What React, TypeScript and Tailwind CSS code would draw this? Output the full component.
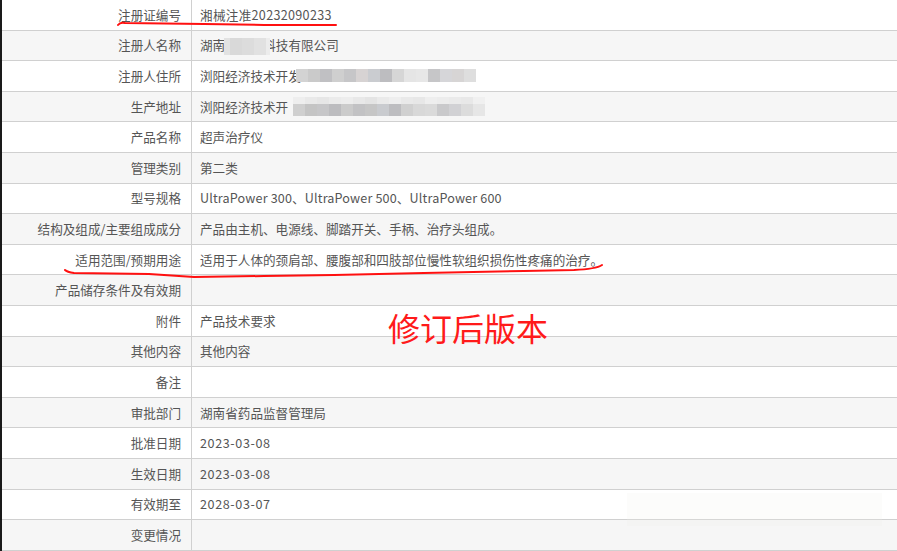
import React from "react";

const rows: [string, string, string?][] = [
  ["注册证编号", "湘械注准20232090233", "tracking-[0.3px]"],
  ["注册人名称", "湖南"],
  ["注册人住所", "浏阳经济技术开发"],
  ["生产地址", "浏阳经济技术开"],
  ["产品名称", "超声治疗仪"],
  ["管理类别", "第二类"],
  ["型号规格", "UltraPower 300、UltraPower 500、UltraPower 600", "tracking-[0.15px]"],
  ["结构及组成/主要组成成分", "产品由主机、电源线、脚踏开关、手柄、治疗头组成。"],
  ["适用范围/预期用途", "适用于人体的颈肩部、腰腹部和四肢部位慢性软组织损伤性疼痛的治疗。"],
  ["产品储存条件及有效期", ""],
  ["附件", "产品技术要求"],
  ["其他内容", "其他内容"],
  ["备注", ""],
  ["审批部门", "湖南省药品监督管理局"],
  ["批准日期", "2023-03-08", "tracking-[0.6px]"],
  ["生效日期", "2023-03-08", "tracking-[0.6px]"],
  ["有效期至", "2028-03-07", "tracking-[0.6px]"],
  ["变更情况", ""],
];

const mosaic3 = ["#d3d3d3", "#cacaca", "#c0c0c3", "#cfcfcf", "#c6c6c8", "#d7d3d3", "#caccd0", "#bdbdc0", "#d6d6d6", "#e5e5e5", "#e7e7e7", "#c6c6c8", "#d6d6d9", "#d7d5d5", "#dedede"];
const mosaic4a = ["#eeeeee", "#e9e9e9", "#e6e6e6", "#ebebeb", "#ededed", "#e8e8e8", "#e4e4e4", "#eaeaea", "#eeeeee", "#e9e9e9", "#e7e7e7", "#eeeeee", "#ececec", "#eaeaea", "#e8e8e8", "#f0f0f0"];
const mosaic4b = ["#cfcfcf", "#c4c4c4", "#c6c6c8", "#bcbcbf", "#cbcbcb", "#c2c2c4", "#c6c6c6", "#c9cbcf", "#bdbdc0", "#d0d0d0", "#d8d8d8", "#dadada", "#c9c9cb", "#d1d1d4", "#dcdcdc", "#e6e6e6"];

export default function App() {
  return (
    <div
      className="relative w-[897px] h-[551px] overflow-hidden bg-white border-l-2 border-[#1a1a1a]"
      style={{ fontFamily: '"Noto Sans CJK SC", "Noto Sans", sans-serif' }}
    >
      <div className="flex flex-col">
        {rows.map(([label, value, extra], i) => (
          <div
            key={i}
            className={`flex h-[30.6px] shrink-0 border-b border-[#d0d0d0] text-[12.6px] text-[#555] ${i % 2 === 1 ? "bg-[#f6f6f6]" : "bg-white"}`}
          >
            <div className="w-[190px] shrink-0 flex items-center justify-end pr-[10px] pt-px border-r border-[#d0d0d0] whitespace-nowrap">
              {label}
            </div>
            <div className={`flex items-center pl-[8px] pt-px whitespace-nowrap ${extra ?? ""}`}>
              {value}
              {i === 1 && <span className="ml-[38px]">科技有限公司</span>}
              {i === 3 && <span className="ml-[168px] text-[#888]">号</span>}
            </div>
          </div>
        ))}
      </div>

      {/* mosaic blurs */}
      <div className="absolute left-[222px] top-[38px] flex h-[17px]">
        <div className="w-[6px] bg-[#e2e2e2]" />
        <div className="w-[12px] bg-[#d9d9d9]" />
        <div className="w-[12px] bg-[#dcdcdc]" />
        <div className="w-[12px] bg-[#e1e1e1]" />
        <div className="w-[4px] bg-[#ececec]" />
      </div>
      <div className="absolute left-[294px] top-[69px] flex h-[13px]">
        {mosaic3.map((c, k) => (
          <div key={k} className="w-[12px]" style={{ background: c }} />
        ))}
      </div>
      <div className="absolute left-[291px] top-[97px] flex flex-col">
        <div className="flex h-[7px]">
          {mosaic4a.map((c, k) => (
            <div key={k} className="w-[12px]" style={{ background: c }} />
          ))}
        </div>
        <div className="flex h-[12px]">
          {mosaic4b.map((c, k) => (
            <div key={k} className="w-[12px]" style={{ background: c }} />
          ))}
        </div>
      </div>

      {/* faint rectangle */}
      <div className="absolute left-[625px] top-[493px] w-[255px] h-[33px] bg-[#f0f0ea]/20" />

      {/* red annotation text */}
      <div
        className="absolute left-[386px] top-[311px] text-[32px] leading-none text-[#ff1a1a] whitespace-nowrap"
        style={{ fontFamily: '"Noto Sans CJK SC", sans-serif' }}
      >
        修订后版本
      </div>

      {/* red underlines */}
      <svg className="absolute left-0 top-0" width="897" height="551" viewBox="-2 0 897 551">
        <path
          d="M114 25 Q116 22 121 23 L200 24 L260 25 L332 25"
          fill="none"
          stroke="#ff1010"
          strokeWidth="2"
          strokeLinecap="round"
        />
        <path
          d="M61 270 Q63 272 70 273 L145 274 L190 277 L260 276 L330 275 L420 273 L520 271 L570 270 Q592 269 598 265"
          fill="none"
          stroke="#ff1010"
          strokeWidth="2"
          strokeLinecap="round"
        />
      </svg>
    </div>
  );
}
